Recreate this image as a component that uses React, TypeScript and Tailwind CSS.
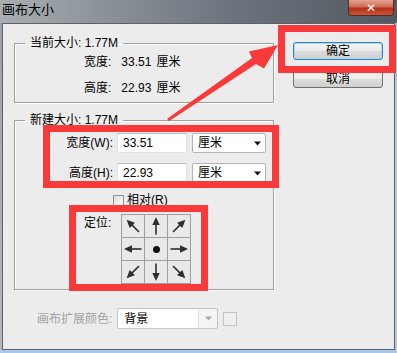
import React from "react";

const RED = "border-[#fa3a3a]";

function DirArrow({ rot }: { rot: number }) {
  return (
    <svg width="22" height="22" viewBox="0 0 22 22">
      <g transform={`rotate(${rot} 11 11)`}>
        <line x1="11" y1="19.5" x2="11" y2="8" stroke="#2e2e2e" strokeWidth="1.6" />
        <polygon points="11,2 7.3,10 14.7,10" fill="#2e2e2e" />
      </g>
    </svg>
  );
}

function Cell({ kind }: { kind: string }) {
  const rots: Record<string, number> = { nw: -45, n: 0, ne: 45, w: -90, e: 90, sw: -135, s: 180, se: 135 };
  return (
    <div className="w-[22px] h-[22px] bg-[#e9e9e9] flex items-center justify-center">
      {kind === "c" ? (
        <div className="w-[7px] h-[7px] rounded-full bg-[#111]" />
      ) : (
        <DirArrow rot={rots[kind]} />
      )}
    </div>
  );
}

function Combo({ text, w }: { text: string; w: string }) {
  return (
    <div className={`${w} h-[20px] ml-[5px] bg-white border border-[#b4b4b4] rounded-[2px] flex items-center justify-between pl-[5px] pr-[4px]`}>
      <span>{text}</span>
      <svg width="7" height="5" viewBox="0 0 7 5">
        <polygon points="0,0.5 7,0.5 3.5,4.5" fill="#111" />
      </svg>
    </div>
  );
}

function TextBox({ value }: { value: string }) {
  return (
    <div className="w-[70px] h-[20px] ml-[4px] bg-white border border-[#dfe2e8] border-t-[#b9bcc3] flex items-center pl-[5px]">
      {value}
    </div>
  );
}

export default function App() {
  const cells = ["nw", "n", "ne", "w", "c", "e", "sw", "s", "se"];
  return (
    <div className="relative w-[397px] h-[353px] overflow-hidden bg-[#a9c7e6] text-[12px] leading-[14px] text-black font-['Liberation_Sans','Noto_Sans_CJK_SC',sans-serif]">
      {/* title bar */}
      <div className="h-[23px] flex justify-between items-start bg-[linear-gradient(90deg,#a9aeb3_0%,#8c939a_25%,#6a727b_60%,#515961_100%)]">
        <div className="ml-[2px] mt-[2px] text-[13px] leading-[16px] text-black">画布大小</div>
        <div className="mr-[3px] w-[46px] h-[16px] rounded-b-[4px] border border-t-0 border-[#5a2a22] bg-[linear-gradient(180deg,#e4a393_0%,#cf6a55_45%,#b3311b_55%,#c9553c_100%)] flex items-center justify-center">
          <span className="text-white font-bold text-[12px] leading-[12px] font-['DejaVu_Sans',sans-serif]">✕</span>
        </div>
      </div>
      {/* body frame */}
      <div className="flex h-[327px]">
        <div className="w-[2px] bg-[linear-gradient(180deg,#9ca2a8,#b5b9bd)]" />
        <div className="w-[393px] h-[327px] border border-[#5b626a] bg-[#ececec] flex">
          {/* left column */}
          <div className="ml-[11px] mt-[12px] w-[260px] flex flex-col">
            <fieldset className="border border-[#a0a0a0] shadow-[inset_1px_1px_0_#fff,1px_1px_0_#fff] pb-[7px]">
              <legend className="ml-[10px] px-[5px]">当前大小: 1.77M</legend>
              <div className="mt-[5px] ml-[69px] flex">
                <span>宽度:</span>
                <span className="ml-[10px]">33.51</span>
                <span className="ml-[5px]">厘米</span>
              </div>
              <div className="mt-[12px] ml-[69px] flex">
                <span>高度:</span>
                <span className="ml-[10px]">22.93</span>
                <span className="ml-[5px]">厘米</span>
              </div>
            </fieldset>
            <fieldset className="mt-[10px] border border-[#a0a0a0] shadow-[inset_1px_1px_0_#fff,1px_1px_0_#fff] pb-[5px]">
              <legend className="ml-[10px] px-[5px]">新建大小: 1.77M</legend>
              <div className="mt-[6px] flex items-center">
                <span className="w-[98px] text-right">宽度(W):</span>
                <TextBox value="33.51" />
                <Combo text="厘米" w="w-[74px]" />
              </div>
              <div className="mt-[10px] flex items-center">
                <span className="w-[98px] text-right">高度(H):</span>
                <TextBox value="22.93" />
                <Combo text="厘米" w="w-[74px]" />
              </div>
              <div className="mt-[10px] ml-[98px] flex items-center">
                <div className="w-[11px] h-[11px] border border-[#8f8f8f] bg-[linear-gradient(135deg,#dcdcdc,#fbfbfb)]" />
                <span className="ml-[3px]">相对(R)</span>
              </div>
              <div className="mt-[7px] ml-[69px] flex items-start">
                <span className="mt-[2px] w-[37px] whitespace-nowrap">定位:</span>
                <div className="grid grid-cols-3 gap-px p-px bg-[#9f9f9f]">
                  {cells.map((k) => (
                    <Cell key={k} kind={k} />
                  ))}
                </div>
              </div>
            </fieldset>
            <div className="mt-[18px] ml-[23px] flex items-center h-[21px]">
              <span className="text-[#a3a3a3] whitespace-nowrap">画布扩展颜色:</span>
              <div className="ml-[5px] w-[101px] h-[21px] border border-[#c4c4c4] rounded-[2px] bg-[#f4f4f4] flex">
                <div className="w-[81px] h-full bg-white border-r border-[#e2e2e2] flex items-center pl-[6px]">背景</div>
                <div className="flex-1 flex items-center justify-center">
                  <svg width="7" height="5" viewBox="0 0 7 5">
                    <polygon points="0,0.5 7,0.5 3.5,4.5" fill="#a8a8a8" />
                  </svg>
                </div>
              </div>
              <div className="ml-[5px] w-[14px] h-[14px] border border-[#c4c4c4] bg-[#efefef]" />
            </div>
          </div>
          {/* buttons */}
          <div className="ml-[19px] mt-[18px] flex flex-col">
            <div className="w-[90px] h-[18px] rounded-[3px] border border-[#3c7fb1] shadow-[inset_0_0_0_1px_#9fdcf6] bg-[linear-gradient(180deg,#f2f2f2_0%,#ebebeb_50%,#dddddd_51%,#cfcfcf_100%)] flex items-center justify-center">
              确定
            </div>
            <div className="mt-[10px] w-[90px] h-[18px] rounded-[3px] border border-[#707070] bg-[linear-gradient(180deg,#f2f2f2_0%,#ebebeb_50%,#dddddd_51%,#cfcfcf_100%)] flex items-center justify-center">
              取消
            </div>
          </div>
        </div>
        <div className="w-[2px] bg-[#b8c4e0]" />
      </div>

      {/* annotations */}
      <div className={`absolute left-[278px] top-[25px] w-[118px] h-[48px] border-[7px] ${RED}`} />
      <div className={`absolute left-[43px] top-[125px] w-[236px] h-[63px] border-[7px] ${RED}`} />
      <div className={`absolute left-[69px] top-[205px] w-[139px] h-[86px] border-[7px] ${RED}`} />
      <svg className="absolute left-0 top-0 pointer-events-none" width="397" height="353" viewBox="0 0 397 353">
        <polygon
          points="167.2,118.8 252,58.1 249,51.5 278,45 264,68.5 256,63.9 168.8,121.2"
          fill="#fa3a3a"
        />
      </svg>
    </div>
  );
}
